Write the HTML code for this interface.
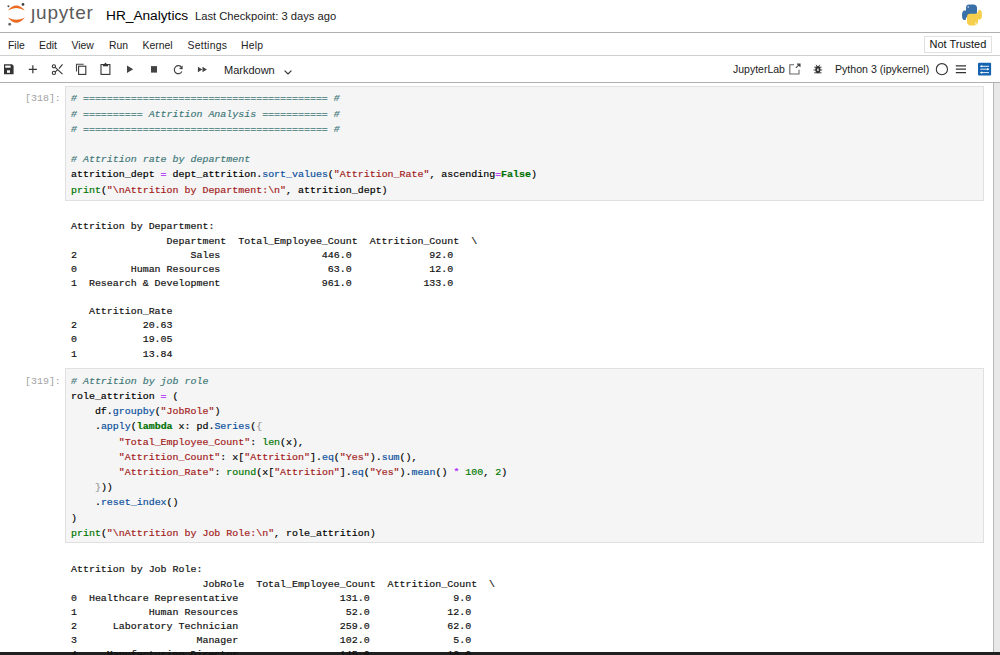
<!DOCTYPE html>
<html><head><meta charset="utf-8">
<style>
html,body{margin:0;padding:0;width:1000px;height:655px;overflow:hidden;background:#fff;position:relative}
*{box-sizing:border-box}
.a{position:absolute;white-space:pre}
.ui{font-family:"Liberation Sans",sans-serif;color:#222}
.hl{position:absolute;left:0;width:1000px;height:1px}
.cell{position:absolute;left:65px;width:919px;background:#f5f5f5;border:1px solid #e0e0e0}
.mono{font-family:"Liberation Mono",monospace;font-size:9.96px;-webkit-text-stroke:0.18px currentColor}
pre{margin:0}
.code{position:absolute;left:71px;line-height:15.2px;color:#000}
.out{position:absolute;left:71px;line-height:14.13px;color:#111}
.prompt{position:absolute;left:25px;color:#a2a2a2;-webkit-text-stroke:0}
.c{color:#3f7878;font-style:italic}
.o{color:#aa22ff}
.s{color:#a31c1c}
.b{color:#007400}
.k{color:#007000;font-weight:bold}
.p{color:#0a4f9c}
.n{color:#007a00}
.br{color:#999}
</style></head><body>

<!-- header -->
<svg class="a" style="left:0;top:0" width="34" height="30" viewBox="0 0 34 30">
  <path d="M7.9 10.6 Q16.3 0.4 24.8 10.6 Q16.3 5.6 7.9 10.6Z" fill="#ec6a1f"/>
  <path d="M7.9 17.4 Q16.3 28 24.8 17.4 Q16.3 22 7.9 17.4Z" fill="#ec6a1f"/>
  <circle cx="23" cy="4.4" r="1.35" fill="#3f3f3f"/>
  <circle cx="8.4" cy="6.2" r="0.95" fill="#4a4a4a"/>
  <circle cx="9.7" cy="24.3" r="1.45" fill="#707070"/>
</svg>
<div class="a ui" style="left:31px;top:-0.5px;font-size:19px;letter-spacing:0.8px;color:#5a5a5a;line-height:26px">&#x237;upyter</div>
<div class="a ui" style="left:106px;top:6px;font-size:13.7px;color:#000;line-height:20px">HR_Analytics</div>
<div class="a ui" style="left:195px;top:7px;font-size:11.2px;color:#222;line-height:18px">Last Checkpoint: 3 days ago</div>
<svg class="a" style="left:960px;top:3px" width="24" height="24" viewBox="0 0 24 24">
  <path d="M9 1.6h4.5c2 0 3.5 1.5 3.5 3.5v5.2c0 1.6-1.3 2.9-2.9 2.9H8.9c-1.8 0-3.2 1.4-3.2 3.2v0.6H4.2C2.8 17 2 15.5 2 12.3c0-3.3 1-4.8 2.6-4.8H6V5.1C6 2.6 7 1.6 9 1.6z" fill="#3a70a8"/>
  <circle cx="8.2" cy="4" r="0.7" fill="#fff"/>
  <path d="M15 22.4h-4.5c-2 0-3.5-1.5-3.5-3.5v-5.2c0-1.6 1.3-2.9 2.9-2.9h5.2c1.8 0 3.2-1.4 3.2-3.2V7h1.5C21.2 7 22 8.5 22 11.7c0 3.3-1 4.8-2.6 4.8H18v1.8c0 2.5-1 3.5-3 3.5z" fill="#f6d04d"/>
  <circle cx="15.8" cy="20" r="0.7" fill="#fff"/>
</svg>
<div class="hl" style="top:32px;background:#b0b0b0"></div>

<!-- menu -->
<div class="a ui" style="left:8px;top:39px;font-size:10.4px;line-height:14px">File</div>
<div class="a ui" style="left:39px;top:39px;font-size:10.4px;line-height:14px">Edit</div>
<div class="a ui" style="left:71.5px;top:39px;font-size:10.4px;line-height:14px">View</div>
<div class="a ui" style="left:109px;top:39px;font-size:10.4px;line-height:14px">Run</div>
<div class="a ui" style="left:142.5px;top:39px;font-size:10.4px;line-height:14px">Kernel</div>
<div class="a ui" style="left:187.6px;top:39px;font-size:10.4px;line-height:14px;letter-spacing:0.25px">Settings</div>
<div class="a ui" style="left:241px;top:39px;font-size:10.4px;line-height:14px;letter-spacing:0.2px">Help</div>
<div class="a" style="left:924px;top:36px;width:68px;height:17px;border:1px solid #e0e0e0;background:#fff"></div>
<div class="a ui" style="left:929.5px;top:36.5px;font-size:11px;line-height:14px;color:#111">Not Trusted</div>
<div class="hl" style="top:55px;background:#cfcfcf"></div>

<!-- toolbar -->
<svg class="a" style="left:0;top:58px" width="300" height="22" viewBox="0 58 300 22">
  <!-- save -->
  <path d="M4 64.2h8l1.6 1.6v8.4H4z" fill="#333"/>
  <rect x="5.2" y="65.6" width="5.4" height="2.1" fill="#fff"/>
  <rect x="7" y="70.3" width="3" height="2.5" fill="#fff"/>
  <!-- plus -->
  <path d="M28.8 69.3h8.1M32.85 65.2v8.1" stroke="#333" stroke-width="1.2"/>
  <!-- scissors -->
  <circle cx="53.9" cy="66.3" r="1.6" fill="none" stroke="#333" stroke-width="1.1"/>
  <circle cx="53.9" cy="72.9" r="1.6" fill="none" stroke="#333" stroke-width="1.1"/>
  <path d="M55.2 67.3L62.5 74.2M55.2 71.9L57.6 69.8M59 68.6L62.5 64.4" stroke="#333" stroke-width="1.1" fill="none"/>
  <!-- copy -->
  <path d="M76.5 71.5V64.2h7.2" stroke="#444" stroke-width="1.1" fill="none"/>
  <rect x="78.6" y="66.2" width="7.2" height="8.2" stroke="#333" stroke-width="1.1" fill="none"/>
  <!-- paste -->
  <rect x="101" y="64.6" width="8.9" height="9.8" stroke="#333" stroke-width="1.1" fill="none"/>
  <path d="M103 64.3h5v2h-5z" fill="#333"/>
  <circle cx="105.5" cy="63.6" r="0.9" fill="#333"/>
  <!-- play -->
  <path d="M127 65.6L133.2 69.3L127 73z" fill="#444"/>
  <!-- stop -->
  <rect x="151" y="66.1" width="6" height="6.5" fill="#444"/>
  <!-- restart -->
  <path d="M181.6 67.4A4 4 0 1 0 181.9 71.5" stroke="#444" stroke-width="1.2" fill="none"/>
  <path d="M182.6 65.6L182.6 69.3L179 68.9z" fill="#444"/>
  <!-- ff -->
  <path d="M197.9 66.8L202.3 69.5L197.9 72.2zM202.5 66.8L206.9 69.5L202.5 72.2z" fill="#444"/>
  <!-- chevron -->
  <path d="M284.6 70.6L288 74L291.4 70.6" stroke="#333" stroke-width="1.2" fill="none"/>
</svg>
<div class="a ui" style="left:224px;top:62.7px;font-size:11px;line-height:14px">Markdown</div>

<div class="a ui" style="left:733px;top:62px;font-size:10.5px;line-height:14px">JupyterLab</div>
<svg class="a" style="left:780px;top:58px" width="220" height="22" viewBox="780 58 220 22">
  <!-- external -->
  <path d="M794 64.8H789.8V74H799V69.8" stroke="#666" stroke-width="1.1" fill="none"/>
  <path d="M795.8 67.8L799.8 64.2M797 64.1H800V67" stroke="#444" stroke-width="1.1" fill="none"/>
  <!-- bug -->
  <g fill="#333" stroke="#333">
    <ellipse cx="817.9" cy="69.6" rx="2.6" ry="3.6" stroke="none"/>
    <path d="M814.2 67.2h7.4M813.6 70h8.6M814.2 72.8h7.4M816 64.8l1 1.4M819.8 64.8l-1 1.4" stroke-width="0.9" fill="none"/>
  </g>
  <rect x="817.1" y="68.6" width="1.6" height="2.4" fill="#ddd"/>
  <!-- circle -->
  <circle cx="941.9" cy="69.2" r="5.6" fill="none" stroke="#333" stroke-width="1.1"/>
  <!-- hamburger -->
  <path d="M955.8 65.8h10.2M955.8 69.2h10.2M955.8 72.7h10.2" stroke="#333" stroke-width="1.3"/>
  <!-- blue -->
  <rect x="978" y="62.8" width="13.1" height="12.8" rx="1" fill="#1563b0"/>
  <path d="M980.3 66.3h8.7M980.3 69.2h8.7M980.3 72.6h8.7" stroke="#fff" stroke-width="0.9"/>
  <path d="M980.2 66.3l2 -1.3v2.6zM989.1 69.2l-2 -1.3v2.6zM980.2 72.6l2 -1.3v2.6z" fill="#fff"/>
</svg>
<div class="a ui" style="left:835px;top:62px;font-size:10.6px;line-height:14px">Python 3 (ipykernel)</div>
<div class="hl" style="top:82px;background:#b0b0b0"></div>

<!-- scrollbar -->
<div class="a" style="left:993px;top:83px;width:1px;height:569px;background:#b8b8b8"></div>
<div class="a" style="left:994px;top:83px;width:6px;height:569px;background:#e8e8e8"></div>
<div class="a" style="left:0;top:652px;width:1000px;height:3px;background:#202020"></div>

<!-- cell 318 -->
<div class="cell" style="top:86px;height:115px"></div>
<pre class="a mono prompt" style="top:91.3px;line-height:15.2px">[318]:</pre>
<pre class="mono code" style="top:91.3px"><span class="c"># ========================================= #</span>
<span class="c"># ========== Attrition Analysis =========== #</span>
<span class="c"># ========================================= #</span>

<span class="c"># Attrition rate by department</span>
attrition_dept <span class="o">=</span> dept_attrition<span>.</span><span class="p">sort_values</span>(<span class="s">"Attrition_Rate"</span>, ascending<span class="o">=</span><span class="k">False</span>)
<span class="b">print</span>(<span class="s">"\nAttrition by Department:\n"</span>, attrition_dept)</pre>

<pre class="mono out" style="top:206.3px">

Attrition by Department:
                Department  Total_Employee_Count  Attrition_Count  \
2                   Sales                 446.0             92.0   
0         Human Resources                  63.0             12.0   
1  Research &amp; Development                 961.0            133.0   

   Attrition_Rate  
2           20.63  
0           19.05  
1           13.84  </pre>

<!-- cell 319 -->
<div class="cell" style="top:368px;height:175px"></div>
<pre class="a mono prompt" style="top:373.7px;line-height:15.2px">[319]:</pre>
<pre class="mono code" style="top:373.7px"><span class="c"># Attrition by job role</span>
role_attrition <span class="o">=</span> (
    df.<span class="p">groupby</span>(<span class="s">"JobRole"</span>)
    .<span class="p">apply</span>(<span class="k">lambda</span> x: pd.<span class="p">Series</span>(<span class="br">{</span>
        <span class="s">"Total_Employee_Count"</span>: <span class="b">len</span>(x),
        <span class="s">"Attrition_Count"</span>: x[<span class="s">"Attrition"</span>].<span class="p">eq</span>(<span class="s">"Yes"</span>).<span class="p">sum</span>(),
        <span class="s">"Attrition_Rate"</span>: <span class="b">round</span>(x[<span class="s">"Attrition"</span>].<span class="p">eq</span>(<span class="s">"Yes"</span>).<span class="p">mean</span>() <span class="o">*</span> <span class="n">100</span>, <span class="n">2</span>)
    <span class="br">}</span>))
    .<span class="p">reset_index</span>()
)
<span class="b">print</span>(<span class="s">"\nAttrition by Job Role:\n"</span>, role_attrition)</pre>

<pre class="mono out" style="top:549.3px">

Attrition by Job Role:
                      JobRole  Total_Employee_Count  Attrition_Count  \
0  Healthcare Representative                 131.0              9.0   
1            Human Resources                  52.0             12.0   
2      Laboratory Technician                 259.0             62.0   
3                    Manager                 102.0              5.0   
4     Manufacturing Director                 145.0             10.0   </pre>

</body></html>
